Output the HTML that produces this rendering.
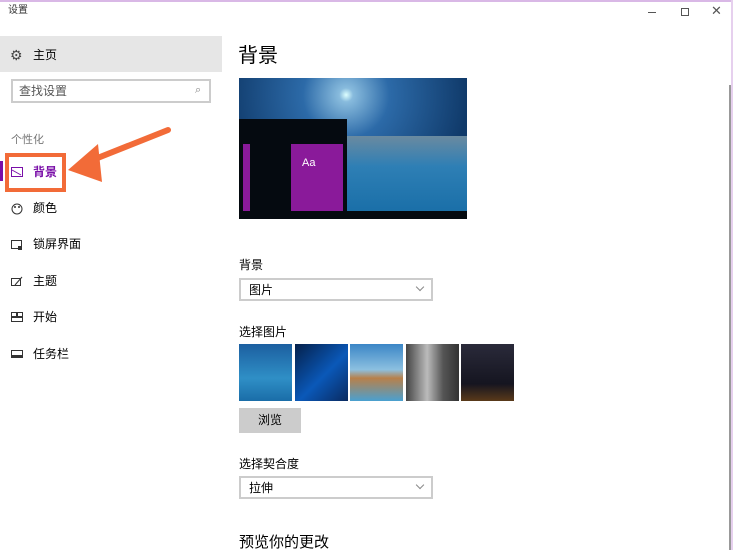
<!DOCTYPE html>
<html><head><meta charset="utf-8"><style>
*{margin:0;padding:0;box-sizing:border-box}
body{width:733px;height:550px;overflow:hidden;background:#fff;font-family:"Liberation Sans","Noto Sans CJK SC",sans-serif;color:#000;position:relative;font-size:12px;line-height:1.2}
.a{position:absolute}
.t{position:absolute;white-space:nowrap}
.item{position:absolute;left:11px;font-size:12px;white-space:nowrap;width:120px;height:16px}
.item span{position:absolute;left:22px;top:0;white-space:nowrap}
.item svg{position:absolute;left:0;top:2px}
.dd{position:absolute;left:239px;width:194px;height:23px;border:2px solid #ccc;font-size:12px;padding:3px 8px}
.dd i{position:absolute;right:8px;top:4px;width:6px;height:6px;border-right:1px solid #888;border-bottom:1px solid #888;transform:rotate(45deg)}
.th{position:absolute;top:344px;width:53px;height:57px}
</style></head><body>
<div class="a" style="left:0;top:0;width:733px;height:2px;background:#d9b8e6"></div>
<div class="a" style="right:0;top:0;width:2px;height:550px;background:#e6d0ee"></div>
<div class="t" style="left:8px;top:5px;font-size:10px;color:#333">设置</div>
<div class="a" style="left:648px;top:12px;width:8px;height:1px;background:#555"></div>
<div class="a" style="left:681px;top:8px;width:8px;height:8px;border:1px solid #555"></div>
<div class="t" style="left:711px;top:3px;font-size:13px;color:#555">✕</div>
<div class="a" style="left:729px;top:85px;width:2px;height:465px;background:#999"></div>

<div class="a" style="left:0;top:36px;width:222px;height:36px;background:#e6e6e6"></div>
<div class="t" style="left:10px;top:47px;font-size:14px;color:#444">⚙</div>
<div class="t" style="left:33px;top:48px;font-size:12px">主页</div>
<div class="a" style="left:11px;top:79px;width:200px;height:24px;border:2px solid #ccc"></div>
<div class="t" style="left:19px;top:84px;font-size:12px;color:#555">查找设置</div>
<div class="t" style="left:195px;top:84px;font-size:11px;color:#888">⌕</div>
<div class="t" style="left:11px;top:134px;font-size:11px;color:#777">个性化</div>

<div class="a" style="left:0;top:161px;width:3px;height:20px;background:#7a0fa8"></div>
<div class="a" style="left:5px;top:153px;width:61px;height:39px;border:4px solid #f26b38"></div>
<div class="item" style="top:165px;color:#7a0fa8"><svg width="12" height="10"><rect x=".5" y=".5" width="11" height="9" fill="none" stroke="#7a0fa8"/><path d="M1 3l9 5" stroke="#7a0fa8"/></svg><span style="font-weight:bold">背景</span></div>
<div class="item" style="top:201px"><svg width="12" height="12"><circle cx="6" cy="6" r="5" fill="none" stroke="#333"/><circle cx="4" cy="4" r="1" fill="#333"/><circle cx="8" cy="4" r="1" fill="#333"/></svg><span>颜色</span></div>
<div class="item" style="top:237px"><svg width="12" height="12"><rect x=".5" y="1.5" width="10" height="8" fill="none" stroke="#333"/><rect x="7" y="7" width="4" height="4" fill="#333"/></svg><span>锁屏界面</span></div>
<div class="item" style="top:274px"><svg width="12" height="12"><rect x=".5" y="2.5" width="9" height="7" fill="none" stroke="#333"/><path d="M4 9l7-8" stroke="#333"/></svg><span>主题</span></div>
<div class="item" style="top:310px"><svg width="12" height="10"><rect x=".5" y=".5" width="5" height="4" fill="none" stroke="#333"/><rect x="6.5" y=".5" width="5" height="4" fill="none" stroke="#333"/><rect x=".5" y="5.5" width="11" height="4" fill="none" stroke="#333"/></svg><span>开始</span></div>
<div class="item" style="top:347px"><svg width="12" height="10"><rect x=".5" y="1.5" width="11" height="7" fill="none" stroke="#333"/><rect x="0" y="6" width="12" height="3" fill="#333"/></svg><span>任务栏</span></div>
<svg class="a" style="left:60px;top:120px" width="120" height="70"><line x1="108" y1="10" x2="20" y2="45" stroke="#f26b38" stroke-width="6" stroke-linecap="round"/><polygon points="8,50 38,24 42,62" fill="#f26b38"/></svg>

<div class="t" style="left:238px;top:44px;font-size:20px">背景</div>
<div class="a" style="left:239px;top:78px;width:228px;height:141px;background:radial-gradient(circle at 47% 12%,#dff 0,#8bd 4%,#2c6aa8 25%,#103a6a 70%)">
 <div class="a" style="left:108px;top:58px;width:120px;height:76px;background:linear-gradient(#6a8aa0 0,#2e7fb5 40%,#1a6fa8)"></div>
</div>
<div class="a" style="left:239px;top:119px;width:108px;height:92px;background:#050a10"></div>
<div class="a" style="left:239px;top:211px;width:228px;height:8px;background:#050a10"></div>
<div class="a" style="left:243px;top:144px;width:7px;height:67px;background:#8a1a9a"></div>
<div class="a" style="left:291px;top:144px;width:52px;height:67px;background:#8a1a9a"></div>
<div class="t" style="left:302px;top:157px;font-size:11px;color:#fff">Aa</div>

<div class="t" style="left:239px;top:258px;font-size:12px">背景</div>
<div class="dd" style="top:278px">图片<i></i></div>
<div class="t" style="left:239px;top:325px;font-size:12px">选择图片</div>
<div class="th" style="left:239px;background:linear-gradient(#1c5fa0,#2f8fc6 60%,#1a6da8)"></div>
<div class="th" style="left:295px;background:linear-gradient(135deg,#05204a,#0a58b8 55%,#0a2a60)"></div>
<div class="th" style="left:350px;background:linear-gradient(#3b86c6,#8cc0e0 45%,#b8804a 60%,#4aa0d0)"></div>
<div class="th" style="left:406px;background:linear-gradient(90deg,#444,#bbb 40%,#555 70%,#333)"></div>
<div class="th" style="left:461px;background:linear-gradient(#2a2a3a,#151520 70%,#5a3a1a)"></div>
<div class="a" style="left:239px;top:408px;width:62px;height:25px;background:#ccc;font-size:12px;text-align:center;line-height:25px">浏览</div>
<div class="t" style="left:239px;top:457px;font-size:12px">选择契合度</div>
<div class="dd" style="top:476px">拉伸<i></i></div>
<div class="t" style="left:239px;top:534px;font-size:15px">预览你的更改</div>
</body></html>
